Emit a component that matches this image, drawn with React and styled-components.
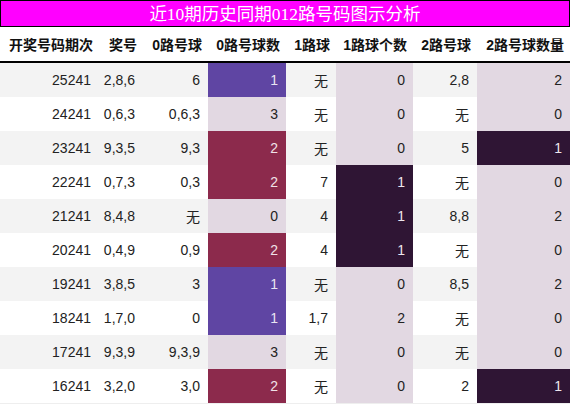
import styled, { createGlobalStyle } from 'styled-components';

const GlobalStyle = createGlobalStyle`
    body {
        margin: 0;
        background: #FFF;
        font-family: 'Liberation Sans', 'Noto Sans CJK SC', sans-serif;
    }
`;

const COLS = [99, 44, 65, 78, 50, 77, 64, 93];
const HEADS = ['开奖号码期次', '奖号', '0路号球', '0路号球数', '1路球', '1路球个数', '2路号球', '2路号球数量'];

const ROWS = [
    ['25241', '2,8,6', '6', 1, '无', 0, '2,8', 2],
    ['24241', '0,6,3', '0,6,3', 3, '无', 0, '无', 0],
    ['23241', '9,3,5', '9,3', 2, '无', 0, '5', 1],
    ['22241', '0,7,3', '0,3', 2, '7', 1, '无', 0],
    ['21241', '8,4,8', '无', 0, '4', 1, '8,8', 2],
    ['20241', '0,4,9', '0,9', 2, '4', 1, '无', 0],
    ['19241', '3,8,5', '3', 1, '无', 0, '8,5', 2],
    ['18241', '1,7,0', '0', 1, '1,7', 2, '无', 0],
    ['17241', '9,3,9', '9,3,9', 3, '无', 0, '无', 0],
    ['16241', '3,2,0', '3,0', 2, '无', 0, '2', 1],
];

// 0路 count colours
const zeroTone = (n) => (n === 1 ? 'purple' : n === 2 ? 'maroon' : 'light');
// 1路 / 2路 count colours
const countTone = (n) => (n === 1 ? 'dark' : 'light');

const TONES = {
    light: { bg: '#E2D8E2', fg: '#222' },
    purple: { bg: '#5F45A3', fg: '#E8E4F2' },
    maroon: { bg: '#8C2A4C', fg: '#F0E2E8' },
    dark: { bg: '#2F1534', fg: '#EDE6EE' },
};

export default function App() {
    return (
        <>
            <GlobalStyle />
            <Wrap>
                <Title>近10期历史同期012路号码图示分析</Title>
                <Table>
                    <colgroup>
                        {COLS.map((w, i) => <col key={i} style={{ width: w }} />)}
                    </colgroup>
                    <thead>
                        <tr>
                            {HEADS.map((h) => <Head key={h}>{h}</Head>)}
                        </tr>
                    </thead>
                    <tbody>
                        {ROWS.map((r, i) => (
                            <Row key={r[0]} $odd={i % 2 === 0}>
                                <Cell>{r[0]}</Cell>
                                <Cell>{r[1]}</Cell>
                                <Cell>{r[2]}</Cell>
                                <Cell $tone={zeroTone(r[3])}>{r[3]}</Cell>
                                <Cell>{r[4]}</Cell>
                                <Cell $tone={countTone(r[5])}>{r[5]}</Cell>
                                <Cell>{r[6]}</Cell>
                                <Cell $tone={countTone(r[7])}>{r[7]}</Cell>
                            </Row>
                        ))}
                    </tbody>
                </Table>
            </Wrap>
        </>
    );
}

const Wrap = styled.div`
    width: 570px;
`;

const Title = styled.div`
    height: 25px;
    border: 1px solid #000;
    background: #FF00FF;
    color: #FFF;
    font-family: 'Liberation Serif', 'Noto Sans CJK SC', serif;
    font-size: 17.5px;
    line-height: 26px;
    text-align: center;
`;

const Table = styled.table`
    width: 570px;
    table-layout: fixed;
    border-collapse: collapse;
    border-spacing: 0;
    font-size: 14px;
    color: #222;
`;

const Head = styled.th`
    height: 34px;
    padding: 0 6px 0 0;
    text-align: right;
    font-weight: bold;
    font-size: 14px;
    color: #111;
    border-bottom: 2px solid #000;
    white-space: nowrap;
`;

const Row = styled.tr`
    background: ${(p) => (p.$odd ? '#F3F3F3' : '#FFF')};

    &:last-child td {
        border-bottom: 1px solid #EEE;
    }
`;

const Cell = styled.td`
    height: 34px;
    padding: 0 8px 0 0;
    text-align: right;
    vertical-align: middle;
    white-space: nowrap;
    background: ${(p) => (p.$tone ? TONES[p.$tone].bg : 'transparent')};
    color: ${(p) => (p.$tone ? TONES[p.$tone].fg : '#222')};
`;
